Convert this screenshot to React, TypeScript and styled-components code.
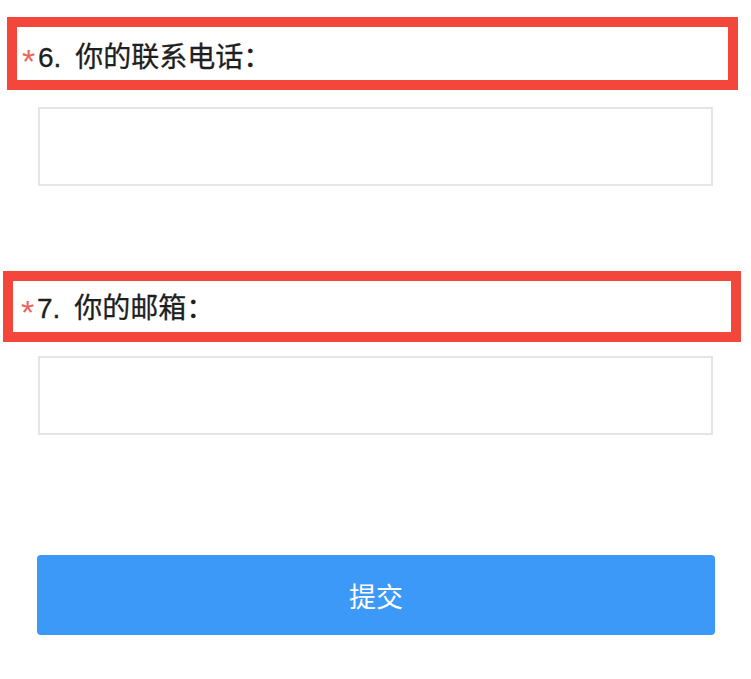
import styled, { createGlobalStyle } from "styled-components";

const GlobalStyle = createGlobalStyle`
  html, body {
    margin: 0;
    padding: 0;
    background: #ffffff;
  }
  * {
    box-sizing: border-box;
  }
`;

const Page = styled.div`
  width: 751px;
  height: 679px;
  padding-top: 17px;
  display: flex;
  flex-direction: column;
  background: #ffffff;
  font-family: "Liberation Sans", "Noto Sans CJK SC", sans-serif;
`;

const Question = styled.div<{ $gapTop: number }>`
  display: flex;
  flex-direction: column;
  margin-top: ${(p) => p.$gapTop}px;
`;

const LabelBox = styled.div<{
  $left: number;
  $width: number;
  $height: number;
  $padLeft: number;
  $shift: number;
}>`
  margin-left: ${(p) => p.$left}px;
  width: ${(p) => p.$width}px;
  height: ${(p) => p.$height}px;
  border: 10px solid #f4473c;
  padding-left: ${(p) => p.$padLeft}px;
  padding-top: ${(p) => p.$shift}px;
  display: flex;
  align-items: center;
`;

const Label = styled.span`
  font-family: "Liberation Sans", "Noto Sans CJK SC", sans-serif;
  font-size: 28px;
  font-weight: 400;
  color: #1e1e1e;
  line-height: 1;
  display: flex;
  align-items: center;
  -webkit-text-stroke: 0.3px #1e1e1e;
`;

const Required = styled.span`
  color: #e8675c;
  font-family: "Liberation Sans", sans-serif;
  font-size: 34px;
  font-weight: 400;
  width: 16px;
  position: relative;
  top: 3px;
  -webkit-text-stroke: 0;
`;

const Num = styled.span`
  margin-right: 14px;
`;

const Input = styled.input<{ $gapTop: number }>`
  margin: ${(p) => p.$gapTop}px 38px 0 38px;
  height: 79px;
  border: 2px solid #e5e5e5;
  background: #ffffff;
  outline: none;
  font-size: 24px;
  padding: 0 12px;
`;

const SubmitButton = styled.button`
  margin: 120px 36px 0 37px;
  height: 80px;
  border: none;
  border-radius: 4px;
  background: #3d99f8;
  color: #ffffff;
  font-family: "Noto Sans CJK SC", sans-serif;
  font-size: 27px;
  font-weight: 400;
  cursor: pointer;
`;

const questions = [
  {
    num: 6,
    text: "你的联系电话：",
    gapTop: 0,
    left: 7,
    width: 731,
    height: 73,
    padLeft: 5,
    shift: 9,
    inputGap: 17,
  },
  {
    num: 7,
    text: "你的邮箱：",
    gapTop: 85,
    left: 3,
    width: 738,
    height: 71,
    padLeft: 8,
    shift: 4,
    inputGap: 14,
  },
];

export default function App() {
  return (
    <>
      <GlobalStyle />
      <Page>
        {questions.map((q) => (
          <Question key={q.num} $gapTop={q.gapTop}>
            <LabelBox
              $left={q.left}
              $width={q.width}
              $height={q.height}
              $padLeft={q.padLeft}
              $shift={q.shift}
            >
              <Label>
                <Required>*</Required>
                <Num>{q.num}.</Num>
                {q.text}
              </Label>
            </LabelBox>
            <Input type="text" $gapTop={q.inputGap} />
          </Question>
        ))}
        <SubmitButton type="button">提交</SubmitButton>
      </Page>
    </>
  );
}
